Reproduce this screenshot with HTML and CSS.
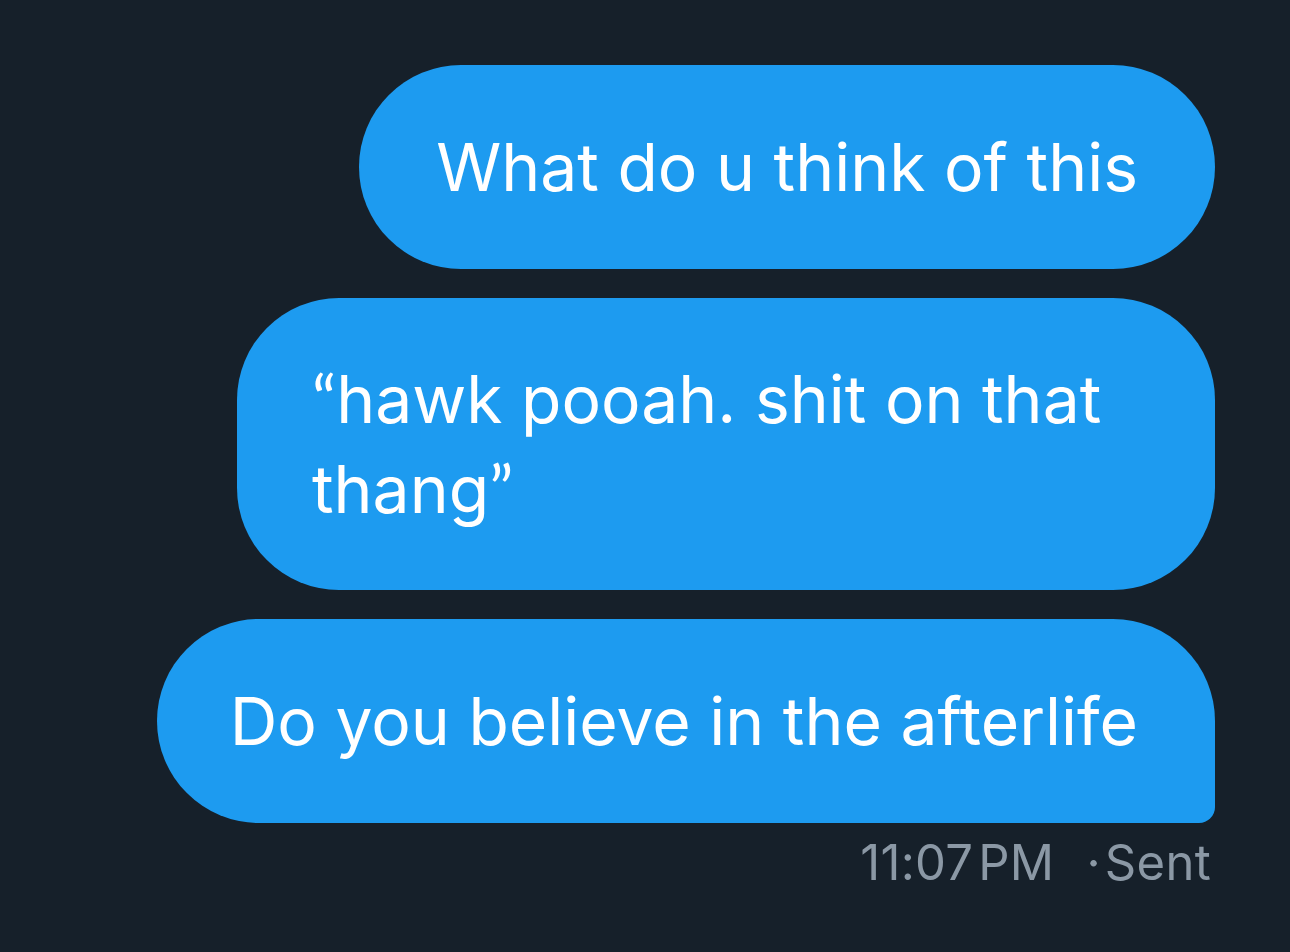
FILE: index.html
```html
<!DOCTYPE html>
<html lang="en">

<head>
    <meta charset="UTF-8">
    <meta name="viewport" content="width=device-width, initial-scale=1.0">
    <title>Messages</title>
    <link rel="stylesheet" href="styles.css">
</head>

<body>
    <!-- Conversation -->
    <div class="thread">
        <div class="bubble">What do u think of this</div>
        <div class="bubble wrap"><span class="q">“</span>hawk pooah. shit on that thang<span class="q">”</span></div>
        <div class="bubble last">Do you believe in the afterlife</div>
        <div class="meta">11:07&#8202;PM <span class="dot">·</span>Sent</div>
    </div>
</body>

</html>
```

FILE: styles.css
```css
body {
    font-family: 'Inter', 'Liberation Sans', sans-serif;
    background-color: #16202a;
    color: #ffffff;
    margin: 0;
    padding: 0;
    min-height: 100vh;
}

.thread {
    display: flex;
    flex-direction: column;
    align-items: flex-end;
    gap: 29px;
    padding: 65px 75px 0 0;
}

.bubble {
    background-color: #1d9bf0;
    color: #ffffff;
    font-size: 66px;
    line-height: 90px;
    padding: 57px 77px;
    max-width: 920px;
    border-radius: 102px;
    white-space: nowrap;
}

.bubble.wrap {
    width: 826px;
    padding-left: 75px;
    padding-top: 56px;
    padding-bottom: 56px;
    white-space: normal;
}

.q {
    font-family: 'Lato', 'Inter', sans-serif;
    line-height: 0;
}

.bubble.last {
    padding-left: 73px;
    border-bottom-right-radius: 16px;
}

.meta {
    margin-top: -17px;
    padding-right: 4px;
    color: #8b98a5;
    font-size: 49px;
    line-height: 56px;
    letter-spacing: 0.3px;
}

.dot {
    margin: 0 4px 0 18px;
}
```
